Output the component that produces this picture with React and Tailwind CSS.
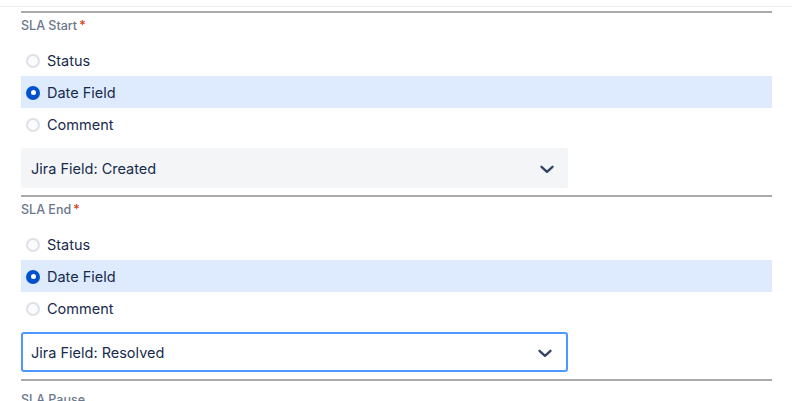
import React from 'react';

const Chevron = () => (
  <svg width="24" height="24" viewBox="0 0 24 24" fill="none">
    <path d="M6.5 9.8L12 14.8l5.5-5" stroke="#344563" strokeWidth="2.4" strokeLinecap="round" strokeLinejoin="round" />
  </svg>
);

const Radio = ({ checked }) =>
  checked ? (
    <span className="w-[14px] h-[14px] rounded-full bg-[#0052cc] flex items-center justify-center">
      <span className="w-[5px] h-[5px] rounded-full bg-white" />
    </span>
  ) : (
    <span className="w-[14px] h-[14px] rounded-full border-2 border-[#dfe1e6] bg-[#fafbfc]" />
  );

const options = ['Status', 'Date Field', 'Comment'];

const Section = ({ title, required, value, focused }) => (
  <div>
    <div className="h-[2px] bg-[#a9a9a9]" />
    <div className={`${value ? 'mt-[5px]' : 'mt-[11px]'} h-4 flex items-center text-[12.5px] font-medium text-[#6b778c]`}>
      {title}
      {required && <span className="ml-[2px] text-[#de350b]">*</span>}
    </div>
    {value && (
      <>
        <div className="mt-[10px]">
          {options.map((o) => (
            <div
              key={o}
              className={`h-8 flex items-center pl-[5px] pt-[1px] gap-[7px] text-[14.5px] text-[#172b4d] ${
                o === 'Date Field' ? 'bg-[#deebff]' : ''
              }`}
            >
              <Radio checked={o === 'Date Field'} />
              <span>{o}</span>
            </div>
          ))}
        </div>
        <div
          className={`mt-2 w-[547px] h-10 rounded-[3px] flex items-center justify-between pr-[9px] pt-[1px] text-[14.5px] text-[#172b4d] ${
            focused ? 'border-2 border-[#4c9aff] bg-white pl-[8px]' : 'bg-[#f4f5f7] pl-[10px]'
          }`}
        >
          <span>{value}</span>
          <Chevron />
        </div>
        <div className="h-[7px]" />
      </>
    )}
  </div>
);

export default function App() {
  return (
    <div className="w-[792px] h-[401px] overflow-hidden bg-white" style={{ fontFamily: 'Inter, "Noto Sans", sans-serif' }}>
      <div className="h-[6px]" />
      <div className="h-[1px] bg-[#ececec]" />
      <div className="px-[21px] pr-[20px] pt-[4px]">
        <Section title="SLA Start" required value="Jira Field: Created" />
        <Section title="SLA End" required value="Jira Field: Resolved" focused />
        <Section title="SLA Pause" />
      </div>
    </div>
  );
}
